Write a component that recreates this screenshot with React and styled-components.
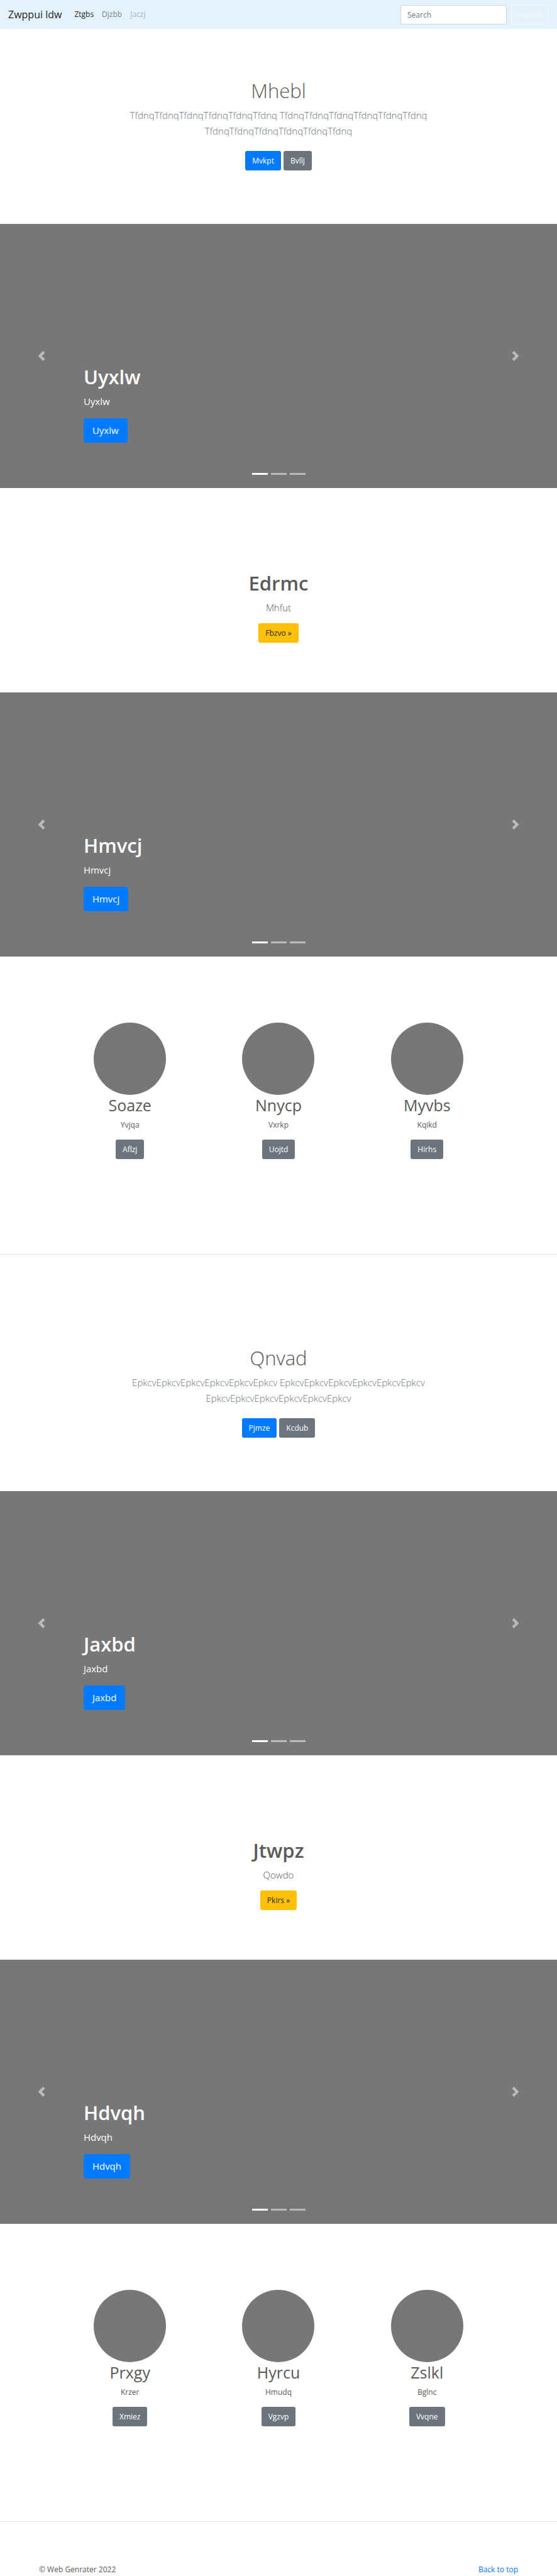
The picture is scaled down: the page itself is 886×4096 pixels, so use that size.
import React from "react";
import styled, { createGlobalStyle, css } from "styled-components";

const GlobalStyle = createGlobalStyle`
  *, *::before, *::after { box-sizing: border-box; }
  body {
    margin: 0;
    background: #fff;
    color: #5a5a5a;
    font-family: "Open Sans", "Noto Sans", sans-serif;
    font-size: 12px;
    line-height: 20px;
  }
  h1, h2, p { margin: 0; }
  button, input { font-family: inherit; }
`;

const Navbar = styled.nav`
  display: flex;
  align-items: center;
  min-height: 46px;
  padding: 0 13px;
  background: #e3f2fd;
`;

const Brand = styled.a`
  margin-right: 20px;
  color: rgba(0, 0, 0, 0.9);
  font-size: 16px;
  line-height: 25px;
  text-decoration: none;
`;

const NavLinks = styled.div`
  display: flex;
  flex: 1;
  gap: 13px;
`;

const NavLink = styled.a`
  color: rgba(0, 0, 0, ${(p) => p.$alpha});
  text-decoration: none;
`;

const SearchForm = styled.form`
  display: flex;
  gap: 7px;
`;

const SearchInput = styled.input`
  width: 169px;
  height: 31px;
  padding: 0 10px;
  border: 1px solid #ced4da;
  border-radius: 3px;
  background: #fff;
  color: #495057;
  font-size: 12px;

  &::placeholder { color: #6c757d; opacity: 1; }
`;

const SearchButton = styled.button`
  height: 31px;
  padding: 0 10px;
  border: 1px solid #f8f9fa;
  border-radius: 3px;
  background: transparent;
  color: #f8f9fa;
  font-size: 12px;
`;

const tones = {
  primary: css`background: #007bff; color: #fff;`,
  secondary: css`background: #6c757d; color: #fff;`,
  warning: css`background: #ffc107; color: #212529;`,
};

const ButtonLink = styled.a`
  display: inline-block;
  padding: ${(p) => (p.$large ? "7px 14px" : "5px 11px")};
  border-radius: ${(p) => (p.$large ? "4px" : "3px")};
  font-size: ${(p) => (p.$large ? "15px" : "12px")};
  line-height: ${(p) => (p.$large ? "25px" : "21px")};
  text-decoration: none;
  ${(p) => tones[p.$tone]}
`;

const Title = styled.h1`
  margin-bottom: 7px;
  font-size: 31px;
  font-weight: ${(p) => (p.$light ? 300 : 600)};
  line-height: 39px;
`;

const Lead = styled.p`
  color: ${(p) => (p.$muted ? "#6c757d" : "inherit")};
  font-size: 15px;
  font-weight: ${(p) => (p.$light ? 300 : 400)};
  line-height: 25px;
`;

const HeroSection = styled.section`
  display: flex;
  flex-direction: column;
  align-items: center;
  padding: 79px 13px 85px;
  text-align: center;

  ${Lead} { max-width: 66%; }
`;

const ButtonRow = styled.div`
  display: flex;
  gap: 4px;
  margin-top: 19px;
`;

const FeatureSection = styled.section`
  display: flex;
  flex-direction: column;
  align-items: center;
  padding: 132px 13px 79px;
  text-align: center;

  ${ButtonLink} { margin-top: 12px; }
`;

const CarouselFrame = styled.section`
  position: relative;
  display: grid;
  grid-template-columns: 15% 1fr 15%;
  height: 420px;
  background: #777;
  color: #fff;
`;

const Control = styled.button`
  display: flex;
  align-items: center;
  justify-content: center;
  padding: 0;
  border: 0;
  background: none;
  color: #fff;
  opacity: 0.5;

  svg { width: 16px; height: 16px; fill: currentColor; }
`;

const Caption = styled.div`
  padding-top: 224px;

  ${ButtonLink} { margin-top: 14px; }
`;

const Indicators = styled.div`
  position: absolute;
  right: 0;
  bottom: 21px;
  left: 0;
  display: flex;
  justify-content: center;
  gap: 5px;
`;

const Indicator = styled.button`
  width: 25px;
  height: 3px;
  padding: 0;
  border: 0;
  background: #fff;
  opacity: ${(p) => (p.$active ? 1 : 0.5)};
`;

const Columns = styled.section`
  display: grid;
  grid-template-columns: repeat(3, 1fr);
  padding: 105px 10% 151px;
`;

const Column = styled.div`
  display: flex;
  flex-direction: column;
  align-items: center;
  text-align: center;

  ${ButtonLink} { margin-top: 13px; }
`;

const Avatar = styled.div`
  width: 115px;
  height: 115px;
  border-radius: 50%;
  background: #777;
`;

const ColumnTitle = styled.h2`
  margin-bottom: 6px;
  font-size: 25px;
  font-weight: 400;
  line-height: 32px;
`;

const Divider = styled.hr`
  height: 1px;
  margin: 0 0 66px;
  border: 0;
  background: rgba(0, 0, 0, 0.1);
`;

const Footer = styled.footer`
  display: flex;
  justify-content: space-between;
  padding: 0 62px;
`;

const FooterLink = styled.a`
  color: #007bff;
  text-decoration: none;
`;

function Hero({ title, word, primary, secondary }) {
  const chunk = word.repeat(6);
  return (
    <HeroSection>
      <Title $light>{title}</Title>
      <Lead $light $muted>{`${chunk} ${chunk} ${chunk}`}</Lead>
      <ButtonRow>
        <ButtonLink href="#" $tone="primary">{primary}</ButtonLink>
        <ButtonLink href="#" $tone="secondary">{secondary}</ButtonLink>
      </ButtonRow>
    </HeroSection>
  );
}

function Carousel({ label }) {
  return (
    <CarouselFrame>
      <Control type="button" aria-label="Previous">
        <svg viewBox="0 0 8 8"><path d="M5.25 0l-4 4 4 4 1.5-1.5-2.5-2.5 2.5-2.5-1.5-1.5z" /></svg>
      </Control>
      <Caption>
        <Title>{label}</Title>
        <Lead>{label}</Lead>
        <ButtonLink href="#" $tone="primary" $large>{label}</ButtonLink>
      </Caption>
      <Control type="button" aria-label="Next">
        <svg viewBox="0 0 8 8"><path d="M2.75 0l-1.5 1.5 2.5 2.5-2.5 2.5 1.5 1.5 4-4-4-4z" /></svg>
      </Control>
      <Indicators>
        {[1, 2, 3].map((n) => (
          <Indicator key={n} type="button" aria-label={`Slide ${n}`} $active={n === 1} />
        ))}
      </Indicators>
    </CarouselFrame>
  );
}

function Feature({ title, text, action }) {
  return (
    <FeatureSection>
      <Title>{title}</Title>
      <Lead $light>{text}</Lead>
      <ButtonLink href="#" $tone="warning">{action} »</ButtonLink>
    </FeatureSection>
  );
}

function Marketing({ items }) {
  return (
    <Columns>
      {items.map(([title, text, action]) => (
        <Column key={title}>
          <Avatar />
          <ColumnTitle>{title}</ColumnTitle>
          <p>{text}</p>
          <ButtonLink href="#" $tone="secondary">{action}</ButtonLink>
        </Column>
      ))}
    </Columns>
  );
}

export default function App() {
  return (
    <>
      <GlobalStyle />
      <Navbar>
        <Brand href="#">Zwppui ldw</Brand>
        <NavLinks>
          <NavLink href="#" $alpha={0.9}>Ztgbs</NavLink>
          <NavLink href="#" $alpha={0.5}>Djzbb</NavLink>
          <NavLink href="#" $alpha={0.3}>Jaczj</NavLink>
        </NavLinks>
        <SearchForm>
          <SearchInput type="search" placeholder="Search" aria-label="Search" />
          <SearchButton type="button">Search</SearchButton>
        </SearchForm>
      </Navbar>
      <main>
        <Hero title="Mhebl" word="Tfdnq" primary="Mvkpt" secondary="Bvllj" />
        <Carousel label="Uyxlw" />
        <Feature title="Edrmc" text="Mhfut" action="Fbzvo" />
        <Carousel label="Hmvcj" />
        <Marketing
          items={[
            ["Soaze", "Yvjqa", "Aflzj"],
            ["Nnycp", "Vxrkp", "Uojtd"],
            ["Myvbs", "Kqikd", "Hirhs"],
          ]}
        />
        <Divider />
        <Hero title="Qnvad" word="Epkcv" primary="Pjmze" secondary="Kcdub" />
        <Carousel label="Jaxbd" />
        <Feature title="Jtwpz" text="Qowdo" action="Pkirs" />
        <Carousel label="Hdvqh" />
        <Marketing
          items={[
            ["Prxgy", "Krzer", "Xmiez"],
            ["Hyrcu", "Hmudq", "Vgzvp"],
            ["Zslkl", "Bglnc", "Vvqne"],
          ]}
        />
        <Divider />
      </main>
      <Footer>
        <p>© Web Genrater 2022</p>
        <FooterLink href="#">Back to top</FooterLink>
      </Footer>
    </>
  );
}
